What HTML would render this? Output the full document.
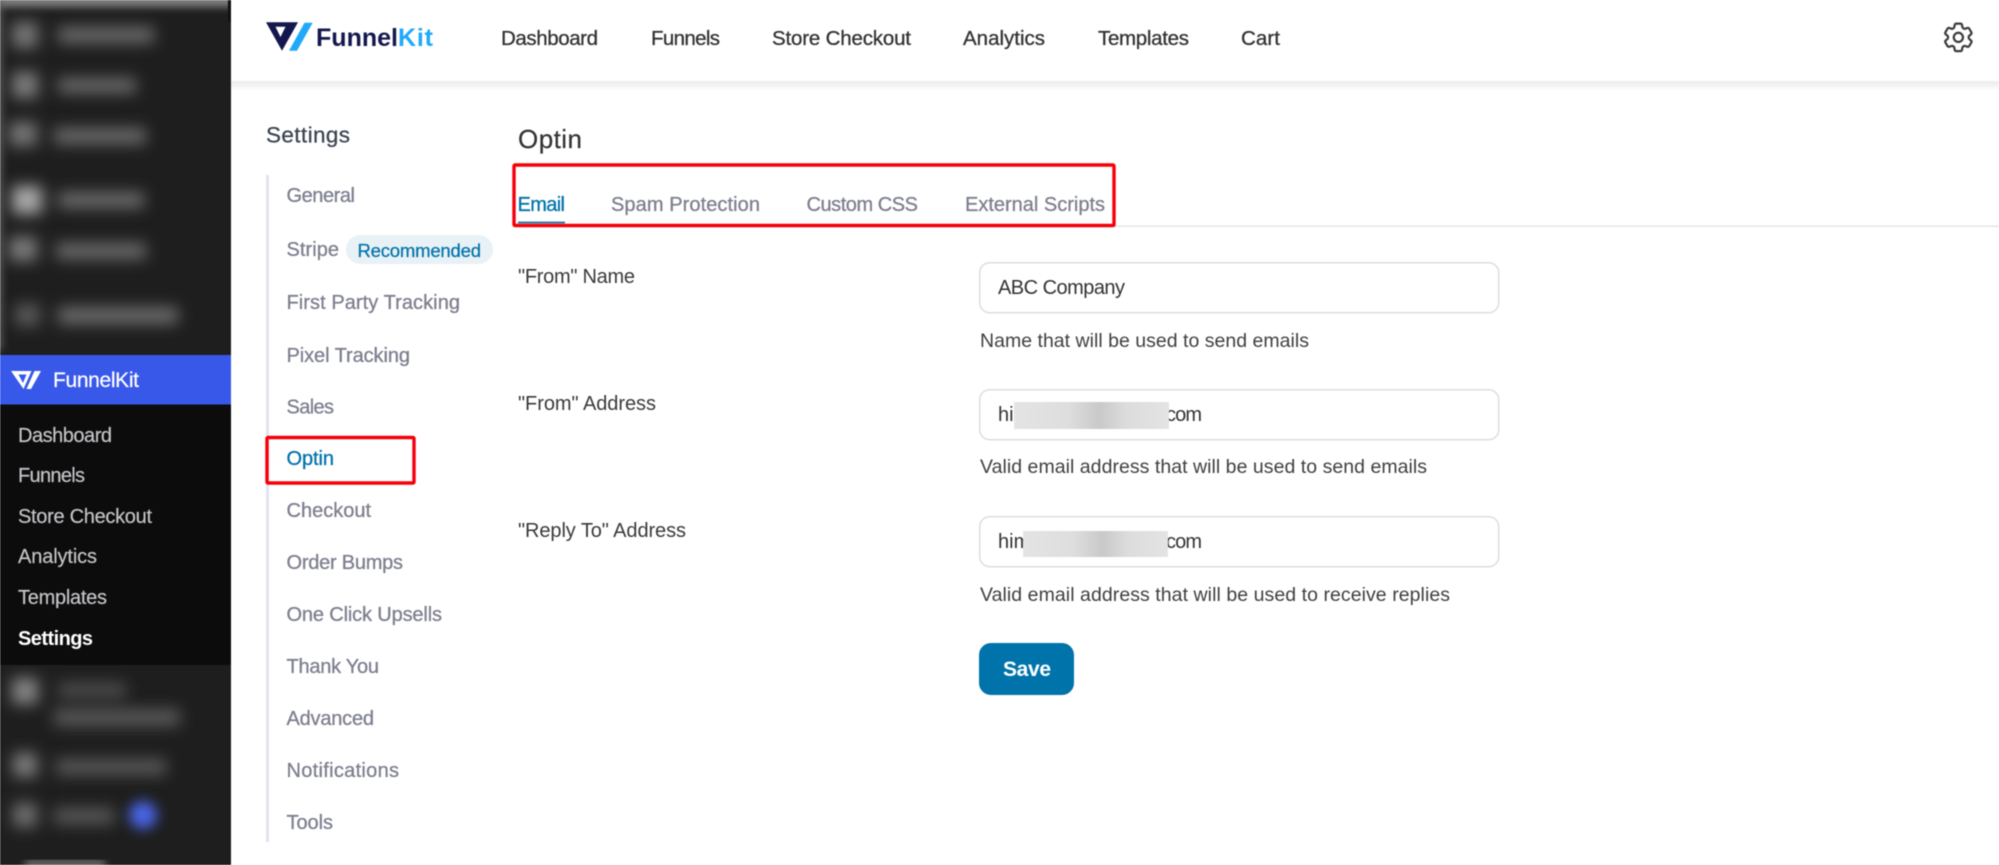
<!DOCTYPE html>
<html lang="en">
<head>
<meta charset="utf-8">
<title>FunnelKit Settings</title>
<style>
html,body{margin:0;padding:0;width:1999px;height:865px;overflow:hidden;background:#fff}
svg{position:absolute;left:0;top:0;display:block;filter:blur(.55px)}
text{font-family:"Liberation Sans",sans-serif}
.top{font-size:20.5px;fill:#333336;stroke:#333336;stroke-width:.3px}
.side{font-size:20px;fill:#7d7f8f;stroke:#7d7f8f;stroke-width:.3px}
.wp{font-size:20px;fill:#c3c4c7;stroke:#c3c4c7;stroke-width:.2px}
.tab{font-size:20px;fill:#7d7f8f;stroke:#7d7f8f;stroke-width:.3px}
.lab{font-size:20px;fill:#3a3a3d}
.val{font-size:20px;fill:#333335}
.help{font-size:19.5px;fill:#404043}
</style>
</head>
<body>
<svg width="1999" height="865" viewBox="0 0 1999 865" xmlns="http://www.w3.org/2000/svg">
<defs>
<filter id="b" x="-30%" y="-60%" width="160%" height="220%"><feGaussianBlur stdDeviation="7.5"/></filter>
<filter id="b2" x="-20%" y="-20%" width="140%" height="140%"><feGaussianBlur stdDeviation="4"/></filter>
<filter id="b3" x="-60%" y="-60%" width="220%" height="220%"><feGaussianBlur stdDeviation="6.5"/></filter>
<linearGradient id="shadow" x1="0" y1="0" x2="0" y2="1"><stop offset="0" stop-color="#ececec"/><stop offset="1" stop-color="#ffffff"/></linearGradient>
<linearGradient id="smear" x1="0" y1="0" x2="1" y2="0">
<stop offset="0" stop-color="#e4e4e4"/><stop offset=".35" stop-color="#dedede"/><stop offset=".55" stop-color="#c9c9c9"/><stop offset=".72" stop-color="#dcdcdc"/><stop offset="1" stop-color="#e4e4e4"/>
</linearGradient>
<clipPath id="sb"><rect x="0" y="0" width="231" height="865"/></clipPath>
</defs>

<rect width="1999" height="865" fill="#fff"/>

<!-- WP sidebar -->
<rect x="0" y="0" width="231" height="865" fill="#1e1e1e"/>
<g clip-path="url(#sb)">
<g filter="url(#b2)">
<rect x="-6" y="-10" width="240" height="17" fill="#808080"/>
<rect x="-10" y="0" width="12" height="350" fill="#5a5a5a"/>
</g>
<g filter="url(#b)" fill="#6a6a6a">
<rect x="12" y="22" width="26" height="26" fill="#757575"/>
<rect x="58" y="27" width="96" height="16"/>
<rect x="12" y="72" width="26" height="26" fill="#7c7c7c"/>
<rect x="58" y="78" width="78" height="15"/>
<rect x="9" y="122" width="28" height="24" fill="#757575"/>
<rect x="54" y="128" width="92" height="16"/>
<rect x="12" y="186" width="30" height="28" fill="#a8a8a8"/>
<rect x="58" y="192" width="86" height="16"/>
<rect x="9" y="237" width="28" height="24" fill="#7a7a7a"/>
<rect x="56" y="243" width="90" height="16"/>
<rect x="15" y="304" width="25" height="22" fill="#585858"/>
<rect x="58" y="307" width="120" height="17"/>
<rect x="12" y="678" width="26" height="26" fill="#858585"/>
<rect x="58" y="683" width="68" height="14" fill="#505050"/>
<rect x="54" y="709" width="126" height="17" fill="#585858"/>
<rect x="13" y="753" width="24" height="24" fill="#7c7c7c"/>
<rect x="56" y="759" width="110" height="16" fill="#585858"/>
<rect x="13" y="803" width="24" height="24" fill="#6e6e6e"/>
<rect x="54" y="808" width="60" height="16" fill="#585858"/>
</g>
<circle cx="143" cy="815" r="14" fill="#4a66e8" filter="url(#b3)"/>
<rect x="25" y="861" width="80" height="6" fill="#8c8c8c" filter="url(#b2)"/>
<rect x="228" y="0" width="3" height="22" fill="#111"/>
<rect x="0" y="404.5" width="231" height="260.5" fill="#0c0c0c"/>
<rect x="0" y="355" width="231" height="49.5" fill="#3858e9"/>
</g>
<path d="M11 371H31.5L23.5 389ZM18.5 374.5L23 383L26.5 374.5Z" fill="#fff" fill-rule="evenodd"/>
<path d="M34.5 371H41L31 389H26.5Z" fill="#fff"/>
<text x="53" y="387" font-size="21" fill="#fff" stroke="#fff" stroke-width=".2" textLength="86">FunnelKit</text>
<text x="18" y="442" class="wp" textLength="94">Dashboard</text>
<text x="18" y="482" class="wp" textLength="67">Funnels</text>
<text x="18" y="523" class="wp" textLength="134">Store Checkout</text>
<text x="18" y="563" class="wp" textLength="79">Analytics</text>
<text x="18" y="604" class="wp" textLength="89">Templates</text>
<text x="18" y="645" font-size="20" font-weight="700" fill="#fff" textLength="75">Settings</text>

<!-- Header -->
<rect x="231" y="81" width="1768" height="10" fill="url(#shadow)"/>
<path d="M266 22.3H298L282 50.7ZM275.5 26.7L280.5 37L285.5 26.7Z" fill="#14174d" fill-rule="evenodd"/>
<path d="M304.5 22.7H312.7L297 50.7H289Z" fill="#1fa9fb"/>
<text x="316" y="46" font-size="25" font-weight="700" fill="#14174d" textLength="82">Funnel</text>
<text x="398" y="46" font-size="25" font-weight="700" fill="#1fa9fb" textLength="35">Kit</text>
<text x="501" y="45" class="top" textLength="97">Dashboard</text>
<text x="651" y="45" class="top" textLength="69">Funnels</text>
<text x="772" y="45" class="top" textLength="139">Store Checkout</text>
<text x="963" y="45" class="top" textLength="82">Analytics</text>
<text x="1098" y="45" class="top" textLength="91">Templates</text>
<text x="1241" y="45" class="top" textLength="39">Cart</text>
<g transform="translate(1940,19) scale(1.53)" fill="none" stroke="#3c3c3e" stroke-width="1.45" stroke-linecap="round" stroke-linejoin="round">
<path d="M9.594 3.94c.09-.542.56-.94 1.11-.94h2.593c.55 0 1.02.398 1.11.94l.213 1.281c.063.374.313.686.645.87.074.04.147.083.22.127.325.196.72.257 1.075.124l1.217-.456a1.125 1.125 0 0 1 1.37.49l1.296 2.247a1.125 1.125 0 0 1-.26 1.431l-1.003.827c-.293.241-.438.613-.43.992a7.723 7.723 0 0 1 0 .255c-.008.378.137.75.43.991l1.004.827c.424.35.534.955.26 1.43l-1.298 2.247a1.125 1.125 0 0 1-1.369.491l-1.217-.456c-.355-.133-.75-.072-1.076.124a6.47 6.47 0 0 1-.22.128c-.331.183-.581.495-.644.869l-.213 1.281c-.09.543-.56.94-1.11.94h-2.594c-.55 0-1.019-.398-1.11-.94l-.213-1.281c-.062-.374-.312-.686-.644-.87a6.52 6.52 0 0 1-.22-.127c-.325-.196-.72-.257-1.076-.124l-1.217.456a1.125 1.125 0 0 1-1.369-.49l-1.297-2.247a1.125 1.125 0 0 1 .26-1.431l1.004-.827c.292-.24.437-.613.43-.991a6.932 6.932 0 0 1 0-.255c.007-.38-.138-.751-.43-.992l-1.004-.827a1.125 1.125 0 0 1-.26-1.43l1.297-2.247a1.125 1.125 0 0 1 1.37-.491l1.216.456c.356.133.751.072 1.076-.124.072-.044.146-.086.22-.128.332-.183.582-.495.644-.869l.214-1.28Z"/>
<circle cx="12" cy="12" r="3"/>
</g>

<!-- Settings nav -->
<text x="266" y="142.5" font-size="22.5" fill="#3b4250" stroke="#3b4250" stroke-width=".25" textLength="84">Settings</text>
<rect x="266" y="175" width="3" height="667" fill="#e2e3ee"/>
<text x="286.5" y="202" class="side" textLength="68.5">General</text>
<text x="286.5" y="256" class="side" textLength="52.5">Stripe</text>
<rect x="346" y="235" width="147" height="29" rx="14.5" fill="#e8f1f6"/>
<text x="357.5" y="257" font-size="18.5" fill="#0073aa" stroke="#0073aa" stroke-width=".25" textLength="123.5">Recommended</text>
<text x="286.5" y="309" class="side" textLength="173.5">First Party Tracking</text>
<text x="286.5" y="362" class="side" textLength="123.5">Pixel Tracking</text>
<text x="286.5" y="413.5" class="side" textLength="47.5">Sales</text>
<text x="286.5" y="465" font-size="20" fill="#0073aa" stroke="#0073aa" stroke-width=".3" textLength="47.5">Optin</text>
<text x="286.5" y="517" class="side" textLength="84.5">Checkout</text>
<text x="286.5" y="569" class="side" textLength="116.5">Order Bumps</text>
<text x="286.5" y="621" class="side" textLength="155.5">One Click Upsells</text>
<text x="286.5" y="673" class="side" textLength="92.5">Thank You</text>
<text x="286.5" y="725" class="side" textLength="87.5">Advanced</text>
<text x="286.5" y="777" class="side" textLength="112.5">Notifications</text>
<text x="286.5" y="829" class="side" textLength="46.5">Tools</text>
<rect x="267" y="437.5" width="147" height="45.5" fill="none" stroke="#f5000a" stroke-width="3.4" rx="1"/>

<!-- Main -->
<text x="518" y="148" font-size="26" fill="#333336" stroke="#333336" stroke-width=".2" textLength="64">Optin</text>
<rect x="517" y="225.5" width="1482" height="1.5" fill="#e4e5ea"/>
<text x="517.5" y="211" font-size="20" fill="#0073aa" stroke="#0073aa" stroke-width=".3" textLength="47.5">Email</text>
<rect x="518" y="221.5" width="47" height="2" fill="#2f7fb0"/>
<text x="611" y="211" class="tab" textLength="149">Spam Protection</text>
<text x="806.5" y="211" class="tab" textLength="111.5">Custom CSS</text>
<text x="965" y="211" class="tab" textLength="140">External Scripts</text>
<rect x="514" y="165" width="600" height="60.5" fill="none" stroke="#f5000a" stroke-width="3.4" rx="1"/>

<text x="518" y="283" class="lab" textLength="117">"From" Name</text>
<text x="518" y="410" class="lab" textLength="138">"From" Address</text>
<text x="518" y="537" class="lab" textLength="168">"Reply To" Address</text>

<rect x="979.7" y="262.7" width="519" height="50" rx="10" fill="#fff" stroke="#dddde0" stroke-width="1.5"/>
<text x="998" y="294" class="val" textLength="127">ABC Company</text>
<text x="980" y="347" class="help" textLength="329">Name that will be used to send emails</text>

<rect x="979.7" y="389.7" width="519" height="50" rx="10" fill="#fff" stroke="#dddde0" stroke-width="1.5"/>
<text x="998" y="421" class="val">hi</text>
<text x="1166" y="421" class="val" textLength="36">com</text>
<rect x="1014" y="402" width="155" height="27" fill="url(#smear)"/>
<text x="980" y="473" class="help" textLength="447">Valid email address that will be used to send emails</text>

<rect x="979.7" y="516.7" width="519" height="50" rx="10" fill="#fff" stroke="#dddde0" stroke-width="1.5"/>
<text x="998" y="548" class="val">him</text>
<text x="1166" y="548" class="val" textLength="36">com</text>
<rect x="1023" y="531" width="145" height="26" fill="url(#smear)"/>
<text x="980" y="601" class="help" textLength="470">Valid email address that will be used to receive replies</text>

<rect x="979" y="643" width="95" height="52" rx="12" fill="#0073aa"/>
<text x="1003" y="676" font-size="21" font-weight="700" fill="#fff" textLength="48">Save</text>
</svg>
</body>
</html>
